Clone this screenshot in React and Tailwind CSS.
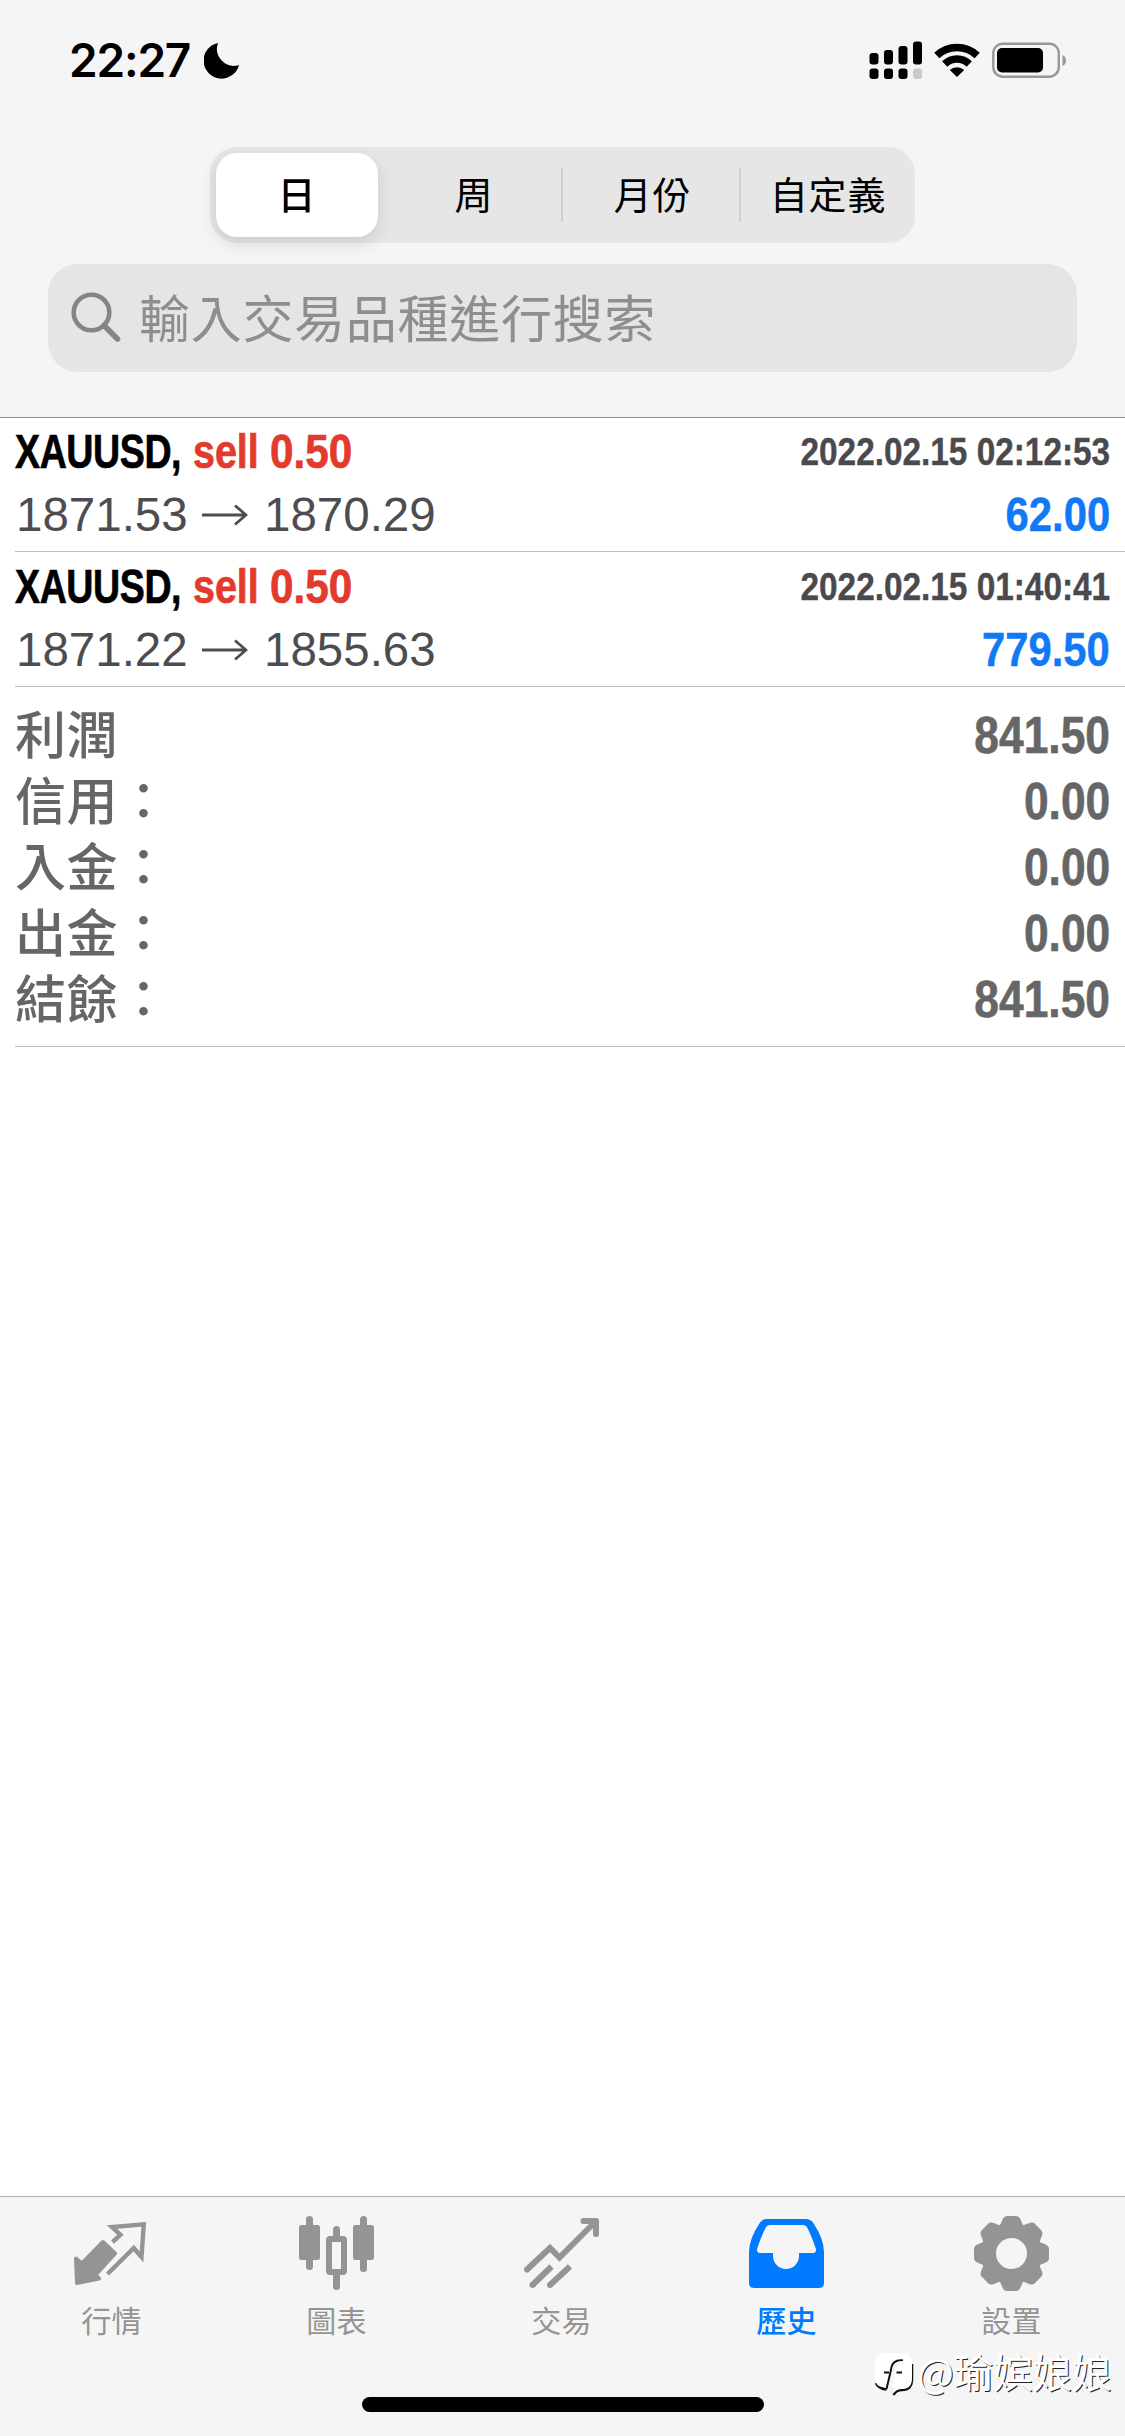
import { useState } from 'react';

const PERIODS = [
    { label: '日', width: 'w-[162px]', inset: 'pl-0' },
    { label: '周', width: 'w-[184px]', inset: 'pl-[8px]' },
    { label: '月份', width: 'w-[178px]', inset: 'pl-[2px]' },
    { label: '自定義', width: 'w-[169px]', inset: 'pl-[6px]' },
];

const DEALS = [
    { id: 1, symbol: 'XAUUSD', side: 'sell', volume: '0.50', open: '1871.53', close: '1870.29', time: '2022.02.15 02:12:53', profit: '62.00' },
    { id: 2, symbol: 'XAUUSD', side: 'sell', volume: '0.50', open: '1871.22', close: '1855.63', time: '2022.02.15 01:40:41', profit: '779.50' },
];

const SUMMARY = [
    { label: '利潤', value: '841.50' },
    { label: '信用：', value: '0.00' },
    { label: '入金：', value: '0.00' },
    { label: '出金：', value: '0.00' },
    { label: '結餘：', value: '841.50' },
];

const TABS = [
    { id: 'quotes', label: '行情', Icon: QuotesIcon },
    { id: 'charts', label: '圖表', Icon: ChartIcon },
    { id: 'trade', label: '交易', Icon: TradeIcon },
    { id: 'history', label: '歷史', Icon: HistoryIcon },
    { id: 'settings', label: '設置', Icon: SettingsIcon },
];

function QuotesIcon() {
    return (
        <svg width="75" height="75" viewBox="0 0 75 75" fill="none" stroke="currentColor">
            <path d="M2 42.5 L8 47.5 L29 26 L41 37.5 L21.5 59 L25 62.500 L3 67 Z" fill="currentColor" strokeWidth="4" strokeLinejoin="round" />
            <path d="M38.5 26 L46.5 18.8 L38 11 L69.8 8.3 L67.5 41 L59.8 32 L33.5 58" strokeWidth="4.4" />
        </svg>
    );
}

function ChartIcon() {
    return (
        <svg width="75" height="75" viewBox="0 0 75 75" fill="currentColor">
            <rect x="7" y="0" width="7" height="54" rx="3.5" />
            <rect x="0" y="9" width="21" height="35" rx="2.5" />
            <rect x="34" y="10" width="7" height="16" rx="3.5" />
            <rect x="34" y="54" width="7" height="20" rx="3.5" />
            <rect x="30" y="23" width="15" height="33" rx="1" fill="none" stroke="currentColor" strokeWidth="6" />
            <rect x="61" y="0" width="7" height="56" rx="3.5" />
            <rect x="54" y="9" width="21" height="35" rx="2.5" />
        </svg>
    );
}

function TradeIcon() {
    return (
        <svg width="75" height="75" viewBox="0 0 75 75" fill="none" stroke="currentColor" strokeWidth="6">
            <path d="M3 53.5 L26 32 L35.5 41.5 L71 6" strokeLinecap="round" />
            <path d="M59.5 5 H72 V18" strokeLinecap="round" strokeLinejoin="round" />
            <path d="M8.5 69 L27.5 50.5 M26 69 L46 50.5" />
            <circle cx="8.5" cy="69" r="3" fill="currentColor" stroke="none" />
            <circle cx="26" cy="69" r="3" fill="currentColor" stroke="none" />
        </svg>
    );
}

function HistoryIcon() {
    return (
        <svg width="75" height="75" viewBox="0 0 75 75" fill="currentColor">
            <path
                fillRule="evenodd"
                d="M18 3 H57 Q61.5 3 64 6.5 Q75 23 75 36 V67 Q75 72 70 72 H5 Q0 72 0 67 V36 Q0 23 11 6.5 Q13.5 3 18 3 Z M21.5 9 Q18 9 16.5 12 Q12 21 8.2 32.5 Q7.3 37 11 37 H24 V40 A13 13 0 0 0 50 40 V37 H64 Q67.7 37 66.8 32.5 Q63 21 58.5 12 Q57 9 53.5 9 Z"
            />
        </svg>
    );
}

function SettingsIcon() {
    return (
        <svg width="75" height="75" viewBox="-37.5 -37.5 75 75" fill="currentColor">
            <circle r="23" fill="none" stroke="currentColor" strokeWidth="15" />
            {[0, 45, 90, 135, 180, 225, 270, 315].map(angle => (
                <path
                    key={angle}
                    transform={`rotate(${angle})`}
                    d="M-13 -27 C-10.5 -29 -10.5 -31 -9 -34 Q-7.5 -37.5 -4.5 -37.5 H4.5 Q7.5 -37.5 9 -34 C10.5 -31 10.5 -29 13 -27 Z"
                />
            ))}
        </svg>
    );
}

function StatusBar() {
    return (
        <div className="flex h-[147px] items-start justify-between pt-[40px] pr-[58px] pl-[69px] text-black">
            <div className="flex items-start">
                <span className="w-[135px] font-['Inter'] text-[46px] leading-[41px] font-semibold tracking-[-1.2px] whitespace-nowrap">22:27</span>
                <svg className="mt-[3px]" width="36" height="36" viewBox="0 0 36 36">
                    <path d="M14 0 A18 18 0 1 0 35 22 A17 17 0 0 1 14 0 Z" />
                </svg>
            </div>
            <div className="flex items-start">
                <svg className="mt-[1px] mr-[11px]" width="54" height="39" viewBox="0 0 54 39">
                    <rect x="0.5" y="12" width="9" height="11.5" rx="3" />
                    <rect x="15" y="9" width="9" height="14.5" rx="3" />
                    <rect x="29.5" y="5" width="9" height="18.5" rx="3" />
                    <rect x="44" y="0.5" width="9" height="23" rx="3" />
                    <rect x="0.5" y="27.5" width="9" height="10.5" rx="3" />
                    <rect x="15" y="27.5" width="9" height="10.5" rx="3" />
                    <rect x="29.5" y="27.5" width="9" height="10.5" rx="3" />
                    <rect x="44" y="27.5" width="9" height="10.5" rx="3" fill="#c9c9c9" />
                </svg>
                <svg className="mt-[3px] mr-[12px]" width="46" height="34" viewBox="0 0 46 34" fill="none" stroke="black">
                    <path d="M2.8 12.5 A29.5 29.5 0 0 1 43.2 12.5" strokeWidth="7.5" />
                    <path d="M10.7 21 A17.7 17.7 0 0 1 35.3 21" strokeWidth="7.5" />
                    <path d="M23 34 L15.8 27 A10.5 10.5 0 0 1 30.2 27 Z" fill="black" stroke="none" />
                </svg>
                <svg className="mt-[2px]" width="75" height="37" viewBox="0 0 75 37">
                    <rect x="1.3" y="1.7" width="65.5" height="33" rx="9.5" fill="none" stroke="#979797" strokeWidth="2.4" />
                    <rect x="5" y="6" width="46" height="24.5" rx="5" />
                    <path d="M70.5 13 Q74 14.5 74 18.5 Q74 22.5 70.5 24 Z" fill="#979797" />
                </svg>
            </div>
        </div>
    );
}

function PeriodTabs({ value, onChange }) {
    return (
        <div className="mx-auto flex h-[96px] w-[705px] rounded-[27px] bg-[#e6e6e7] p-[6px]">
            {PERIODS.map(({ label, width, inset }, i) => (
                <div key={label} className={`flex items-center ${width}`}>
                    {i > 1 && <span className="-ml-[1px] h-[54px] w-[2px] rounded bg-[#cfcfd1]" />}
                    <button
                        onClick={() => onChange(label)}
                        className={`flex h-[84px] flex-1 items-center justify-center rounded-[21px] pb-[6px] text-[38px] tracking-[0.8px] whitespace-nowrap text-black ${inset} ${
                            value === label ? 'bg-white font-medium shadow-[0_6px_18px_rgba(0,0,0,0.12)]' : ''
                        }`}
                    >
                        {label}
                    </button>
                </div>
            ))}
        </div>
    );
}

function SearchBar() {
    return (
        <div className="mx-[48px] mt-[21px] flex h-[108px] items-center rounded-[30px] bg-[#e5e5e7] pl-[23px]">
            <svg width="52" height="52" viewBox="0 0 52 52" fill="none" stroke="#858587">
                <circle cx="20.5" cy="20.5" r="17.8" strokeWidth="4.6" />
                <path d="M33 33.5 L46.5 47" strokeWidth="5.6" strokeLinecap="round" />
            </svg>
            <span className="ml-[16px] pb-[5px] text-[51px] leading-[60px] tracking-[0.7px] text-[#8e8e90]">輸入交易品種進行搜索</span>
        </div>
    );
}

function DealRow({ deal }) {
    return (
        <div className="ml-[15px] flex h-[135px] justify-between border-b border-[#bfbfc1] pr-[15px] font-['Liberation_Sans',sans-serif]">
            <div className="w-[500px] whitespace-nowrap">
                <div className="mt-[11px] flex h-[48px] items-center text-[47.5px] font-bold [-webkit-text-stroke:0.7px]">
                    <span className="w-[178px]">
                        <span className="inline-block origin-left scale-x-[0.79] tracking-[-0.5px] text-black">{deal.symbol},</span>
                    </span>
                    <span className="w-[77px]">
                        <span className="inline-block origin-left scale-x-[0.83] text-[#e23b2e]">{deal.side}</span>
                    </span>
                    <span className="inline-block origin-left scale-x-[0.89] text-[#e23b2e]">{deal.volume}</span>
                </div>
                <div className="mt-[13px] flex h-[52px] items-center text-[47.5px] text-[#4d4d51]">
                    <span className="w-[187px] pl-[1px]">{deal.open}</span>
                    <svg className="w-[46px]" height="22" viewBox="0 0 46 22" fill="none" stroke="currentColor" strokeWidth="2.8">
                        <path d="M0 11 H44 M33 1.5 L44 11 L33 20.5" />
                    </svg>
                    <span className="ml-[16px]">{deal.close}</span>
                </div>
            </div>
            <div className="flex flex-col items-end font-bold whitespace-nowrap">
                <div className="mt-[11px] flex h-[48px] items-center text-[39px] text-[#4a4a4e] [-webkit-text-stroke:0.4px]">
                    <span className="inline-block origin-right scale-x-[0.855]">{deal.time}</span>
                </div>
                <div className="mt-[13px] flex h-[52px] items-center text-[48px] text-[#1279f6] [-webkit-text-stroke:0.5px]">
                    <span className="inline-block origin-right scale-x-[0.87]">{deal.profit}</span>
                </div>
            </div>
        </div>
    );
}

function Summary() {
    return (
        <div className="ml-[15px] h-[360px] border-b border-[#bfbfc1] pt-[16px] pr-[15px] text-[#666666]">
            {SUMMARY.map(row => (
                <div key={row.label} className="flex h-[66px] items-center justify-between">
                    <span className="pb-[8px] text-[51px] leading-[58px] font-medium tracking-[0.5px]">{row.label}</span>
                    <span className="inline-block origin-right scale-x-[0.87] font-['Liberation_Sans',sans-serif] text-[51px] leading-[66px] font-bold [-webkit-text-stroke:0.6px]">
                        {row.value}
                    </span>
                </div>
            ))}
        </div>
    );
}

function TabBar({ active, onSelect }) {
    return (
        <nav className="relative flex h-[240px] flex-col border-t border-[#b0b0b0] bg-[#f5f5f5]">
            <div className="flex">
                {TABS.map(({ id, label, Icon }) => (
                    <button
                        key={id}
                        onClick={() => onSelect(id)}
                        className={`flex w-[225px] flex-col items-center pt-[19px] pr-[2px] ${active === id ? 'text-[#007aff]' : 'text-[#949494]'}`}
                    >
                        <Icon />
                        <span className={`mt-[6px] text-[30px] leading-[44px] tracking-[0.3px] ${active === id ? 'font-medium' : ''}`}>{label}</span>
                    </button>
                ))}
            </div>
            <div className="mx-auto mt-auto mb-[24px] h-[15px] w-[402px] rounded-full bg-black" />
            <Watermark />
        </nav>
    );
}

function Watermark() {
    return (
        <div className="absolute top-[153px] left-[874px] flex items-start whitespace-nowrap text-white">
            <svg width="43" height="50" viewBox="0 0 43 50" fill="none">
                <path d="M38 14 V29 Q38 40 28 40 Q22 40 19.5 45 M2 33 Q4 38.5 12.5 39.5" stroke="#111" strokeWidth="2.5" />
                <path d="M12 3 H27 Q38 3 38 14 V28 Q38 39 28 39 Q22 39 19 44 L21 37 H12 Q1 38 1 28 V14 Q1 3 12 3 Z" fill="#fff" />
                <path d="M29 10.5 Q18 9 17 20 L12.5 39 M10 22.500 H15 M22.500 22.5 H28" stroke="#111" strokeWidth="2" />
                <path d="M30 12.500 Q20.5 12 19.5 21 L16 39" stroke="#f5f5f5" strokeWidth="3" />
            </svg>
            <span className="font-['Noto_Sans_CJK_SC',sans-serif] text-[39.5px] leading-[40px] font-light [text-shadow:1px_1px_0_#fff,2px_2px_0_#222]">@瑜嫔娘娘</span>
        </div>
    );
}

function App() {
    const [period, setPeriod] = useState('日');
    const [activeTab, setActiveTab] = useState('history');

    return (
        <div className="flex h-[2436px] w-[1125px] flex-col overflow-hidden bg-white font-['Noto_Sans_CJK_TC',sans-serif]">
            {/* Header */}
            <header className="h-[418px] border-b border-[#8f8f93] bg-[#f5f5f5]">
                <StatusBar />
                <PeriodTabs value={period} onChange={setPeriod} />
                <SearchBar />
            </header>

            {/* History */}
            <main className="-mt-[1px] flex-1">
                {DEALS.map(deal => (
                    <DealRow key={deal.id} deal={deal} />
                ))}
                <Summary />
            </main>

            <TabBar active={activeTab} onSelect={setActiveTab} />
        </div>
    );
}

export default App;
